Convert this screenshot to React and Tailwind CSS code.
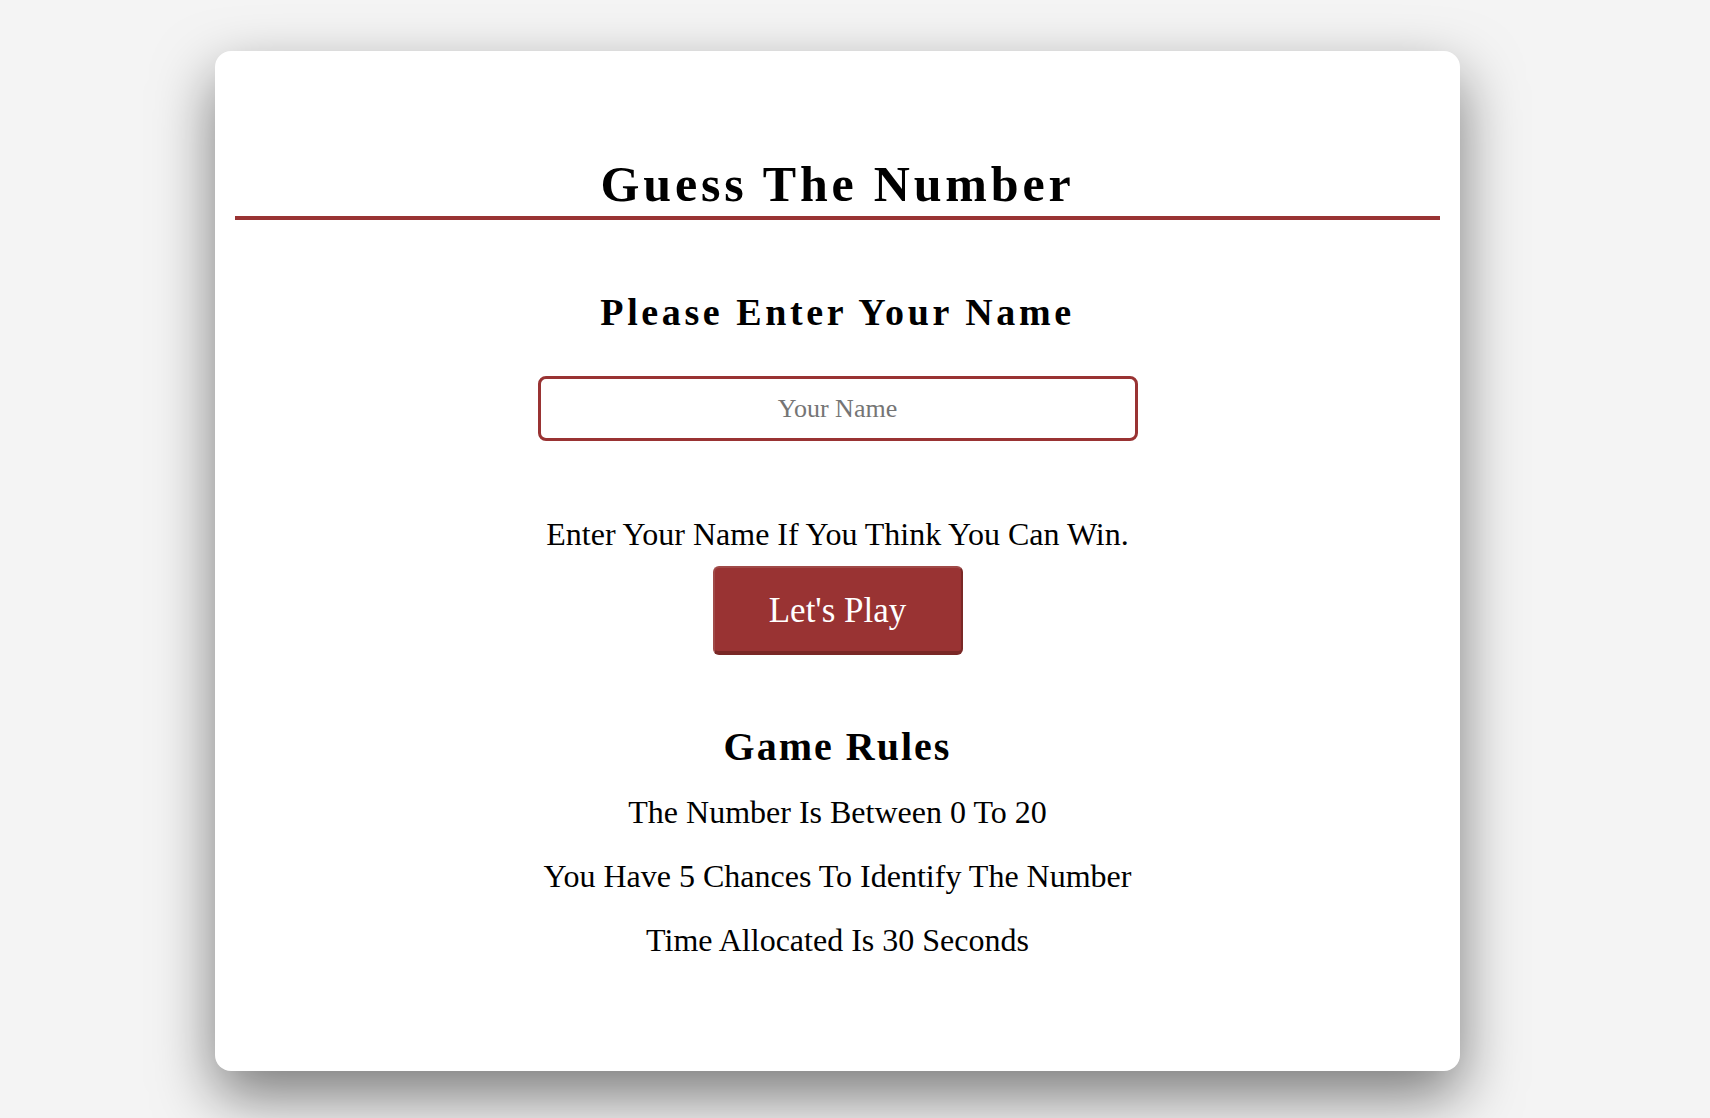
import { useState } from "react"

export default function App() {
  const [name, setName] = useState("")

  const rules = [
    "The Number Is Between 0 To 20",
    "You Have 5 Chances To Identify The Number",
    "Time Allocated Is 30 Seconds",
  ]

  return (
    <div className="min-h-screen bg-[#f4f4f4] pt-[51px] pl-[215px] pb-[60px] font-['Liberation_Serif','Times_New_Roman',serif] text-black">
      <div className="w-[1245px] h-[1020px] bg-white rounded-2xl shadow-[0_25px_60px_rgba(0,0,0,0.5)] px-5 pt-[103px] flex flex-col items-center">
        {/* Title */}
        <h1 className="w-full text-center text-[50px] leading-[60px] font-bold tracking-[3.8px] pb-[2px] border-b-4 border-[#993333]">
          Guess The Number
        </h1>

        {/* Name form */}
        <h2 className="mt-[69px] text-[38px] leading-[46px] font-bold tracking-[3.6px]">
          Please Enter Your Name
        </h2>
        <input
          value={name}
          onChange={(e) => setName(e.target.value)}
          placeholder="Your Name"
          className="mt-[41px] w-[600px] h-[65px] border-[3px] border-[#993333] rounded-lg text-center text-[26px] placeholder:text-[#757575] outline-none"
        />
        <p className="mt-[75px] text-[32px] leading-[37px]">Enter Your Name If You Think You Can Win.</p>
        <button className="mt-[13px] w-[250px] h-[89px] pt-1 bg-[#993333] text-white text-[35px] rounded-md border-2 border-t-[#a04a48] border-l-[#a04a48] border-r-[#7a2826] border-b-[#7a2826] border-b-4">
          Let's Play
        </button>

        {/* Rules */}
        <h2 className="mt-[69px] text-[40px] leading-[46px] font-bold tracking-[0.05em]">Game Rules</h2>
        <div className="mt-[24px] flex flex-col items-center gap-[27px]">
          {rules.map((r) => (
            <p key={r} className="text-[32px] leading-[37px]">
              {r}
            </p>
          ))}
        </div>
      </div>
    </div>
  )
}
